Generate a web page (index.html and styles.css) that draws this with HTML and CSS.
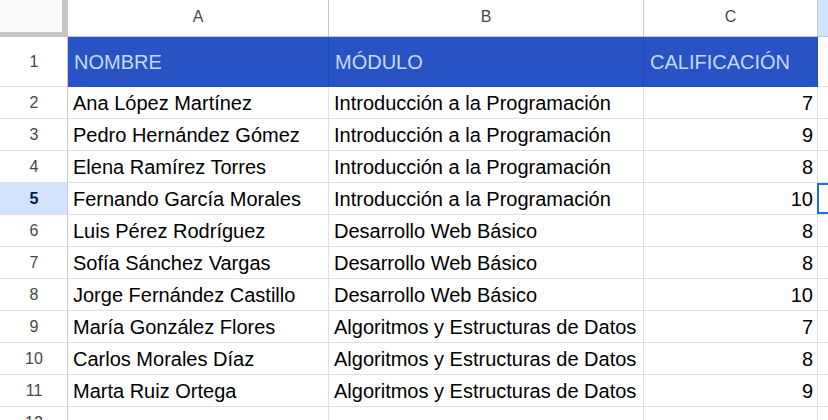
FILE: index.html
```html
<!DOCTYPE html>
<html>
<head>
<meta charset="utf-8">
<link rel="stylesheet" href="styles.css">
</head>
<body>
<div class="sheet">
  <div class="corner"></div>
  <div class="colh">A</div>
  <div class="colh">B</div>
  <div class="colh">C</div>
  <div class="colh colh-active"></div>

  <div class="rowh rowh-tall">1</div>
  <div class="cell head">NOMBRE</div>
  <div class="cell head">MÓDULO</div>
  <div class="cell head">CALIFICACIÓN</div>
  <div class="cell"></div>

  <div class="rowh">2</div>
  <div class="cell">Ana López Martínez</div>
  <div class="cell">Introducción a la Programación</div>
  <div class="cell num">7</div>
  <div class="cell"></div>

  <div class="rowh">3</div>
  <div class="cell">Pedro Hernández Gómez</div>
  <div class="cell">Introducción a la Programación</div>
  <div class="cell num">9</div>
  <div class="cell"></div>

  <div class="rowh">4</div>
  <div class="cell">Elena Ramírez Torres</div>
  <div class="cell">Introducción a la Programación</div>
  <div class="cell num">8</div>
  <div class="cell"></div>

  <div class="rowh rowh-active">5</div>
  <div class="cell">Fernando García Morales</div>
  <div class="cell">Introducción a la Programación</div>
  <div class="cell num">10</div>
  <div class="cell sel"></div>

  <div class="rowh">6</div>
  <div class="cell">Luis Pérez Rodríguez</div>
  <div class="cell">Desarrollo Web Básico</div>
  <div class="cell num">8</div>
  <div class="cell"></div>

  <div class="rowh">7</div>
  <div class="cell">Sofía Sánchez Vargas</div>
  <div class="cell">Desarrollo Web Básico</div>
  <div class="cell num">8</div>
  <div class="cell"></div>

  <div class="rowh">8</div>
  <div class="cell">Jorge Fernández Castillo</div>
  <div class="cell">Desarrollo Web Básico</div>
  <div class="cell num">10</div>
  <div class="cell"></div>

  <div class="rowh">9</div>
  <div class="cell">María González Flores</div>
  <div class="cell">Algoritmos y Estructuras de Datos</div>
  <div class="cell num">7</div>
  <div class="cell"></div>

  <div class="rowh">10</div>
  <div class="cell">Carlos Morales Díaz</div>
  <div class="cell">Algoritmos y Estructuras de Datos</div>
  <div class="cell num">8</div>
  <div class="cell"></div>

  <div class="rowh">11</div>
  <div class="cell">Marta Ruiz Ortega</div>
  <div class="cell">Algoritmos y Estructuras de Datos</div>
  <div class="cell num">9</div>
  <div class="cell"></div>

  <div class="rowh">12</div>
  <div class="cell"></div>
  <div class="cell"></div>
  <div class="cell"></div>
  <div class="cell"></div>
</div>
</body>
</html>
```
FILE: styles.css
```css
* { box-sizing: border-box; }
html, body {
  margin: 0;
  padding: 0;
  background: #ffffff;
  width: 828px;
  height: 420px;
  overflow: hidden;
}
.sheet {
  display: grid;
  grid-template-columns: 68px 261px 315px 174px 1fr;
  grid-template-rows: 37px 50px repeat(11, 32px);
  width: 828px;
  height: 420px;
  overflow: hidden;
  font-family: "Liberation Sans", Arial, sans-serif;
}
.corner {
  background: #f8f9fa;
  border-right: 6px solid #c4c7c5;
  border-bottom: 5px solid #c4c7c5;
}
.colh {
  display: flex;
  align-items: center;
  justify-content: center;
  background: #ffffff;
  border-right: 1px solid #c4c7c5;
  border-bottom: 1px solid #c4c7c5;
  color: #444746;
  font-size: 16px;
  padding-bottom: 3px;
}
.colh-active {
  background: #d3e3fd;
  border-right: none;
}
.rowh {
  display: flex;
  align-items: center;
  justify-content: center;
  background: #ffffff;
  border-right: 1px solid #c4c7c5;
  border-bottom: 1px solid #e1e1e1;
  color: #444746;
  font-size: 16px;
  padding-left: 1px;
}
.rowh-active {
  background: #d3e3fd;
  color: #041e49;
  font-weight: bold;
}
.cell {
  display: flex;
  align-items: center;
  border-right: 1px solid #e1e1e1;
  border-bottom: 1px solid #e1e1e1;
  color: #000000;
  font-size: 20px;
  padding: 1px 5px 0 5px;
  white-space: nowrap;
  overflow: hidden;
}
.head {
  background: #2753c5;
  color: #c6d9f8;
  border-right: 1px solid #2248ad;
  border-bottom: 1px solid #2753c5;
  padding-left: 6px;
}
.num {
  justify-content: flex-end;
  padding-right: 4px;
}
.sel {
  box-shadow: inset 2px 0 0 #1a73e8, inset 0 2px 0 #1a73e8, inset 0 -2px 0 #1a73e8;
  margin-left: -1px;
}
```
